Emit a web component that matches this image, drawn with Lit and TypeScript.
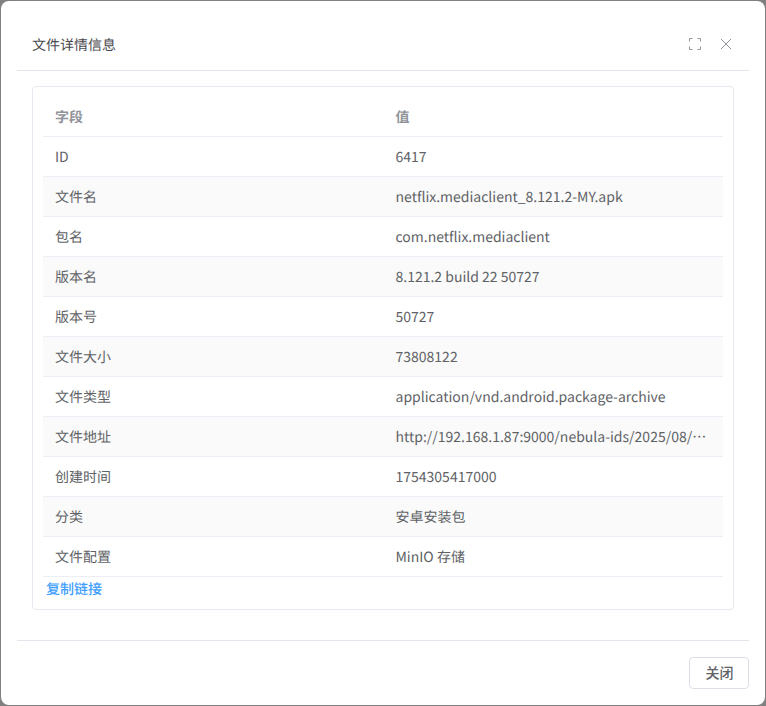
import { LitElement, html, css, svg } from "lit";
import { customElement } from "lit/decorators.js";

const ROWS: [string, string][] = [
  ["ID", "6417"],
  ["文件名", "netflix.mediaclient_8.121.2-MY.apk"],
  ["包名", "com.netflix.mediaclient"],
  ["版本名", "8.121.2 build 22 50727"],
  ["版本号", "50727"],
  ["文件大小", "73808122"],
  ["文件类型", "application/vnd.android.package-archive"],
  ["文件地址", "http://192.168.1.87:9000/nebula-ids/2025/08/04/netflix.mediaclient_8.121.2-MY.apk"],
  ["创建时间", "1754305417000"],
  ["分类", "安卓安装包"],
  ["文件配置", "MinIO 存储"],
];

@customElement("app-root")
export class AppRoot extends LitElement {
  static styles = css`
    :host {
      display: block;
      width: 766px;
      height: 706px;
      background: #808080;
      font-family: "Noto Sans CJK SC", "Noto Sans", sans-serif;
      font-size: 14px;
      color: #606266;
      overflow: hidden;
      text-rendering: geometricPrecision;
    }
    .backdrop {
      box-sizing: border-box;
      height: 706px;
      padding: 1px;
    }
    .dialog {
      box-sizing: border-box;
      height: 704px;
      background: #fff;
      border-radius: 8px;
      padding: 0 16px;
      display: flex;
      flex-direction: column;
    }
    .header {
      box-sizing: border-box;
      height: 70px;
      flex: none;
      border-bottom: 1px solid #e4e4ec;
      display: flex;
      align-items: center;
      justify-content: space-between;
      padding: 17px 16px 0 15px;
    }
    .title {
      font-size: 14px;
      line-height: 22px;
      padding-top: 2px;
      color: #4a4a4f;
    }
    .actions {
      display: flex;
      align-items: center;
      gap: 17px;
    }
    .actions svg {
      display: block;
      width: 14px;
      height: 14px;
    }
    .body {
      flex: 1;
      padding: 15px 15px 30px;
      display: flex;
      flex-direction: column;
      min-height: 0;
    }
    .card {
      box-sizing: border-box;
      height: 524px;
      border: 1px solid #e8e8f0;
      border-radius: 4px;
      padding: 10px;
    }
    .table {
      display: grid;
      grid-template-columns: 340.5px 339.5px;
    }
    .row {
      display: contents;
    }
    .cell {
      box-sizing: border-box;
      height: 40px;
      line-height: 41px;
      padding: 0 12px;
      border-bottom: 1px solid #ebeef5;
      white-space: nowrap;
      overflow: hidden;
      text-overflow: ellipsis;
      background: #fff;
    }
    .row.alt .cell {
      background: #fafafa;
    }
    .row.head .cell {
      font-weight: 700;
      color: #909399;
    }
    .link {
      display: block;
      margin: 0 0 0 3px;
      line-height: 24px;
      font-weight: 500;
      color: #409eff;
      text-decoration: none;
    }
    .footer {
      box-sizing: border-box;
      height: 65px;
      flex: none;
      border-top: 1px solid #e4e4ec;
      display: flex;
      justify-content: flex-end;
      padding-top: 16px;
    }
    .btn {
      box-sizing: border-box;
      width: 60px;
      height: 32px;
      border: 1px solid #dcdfe6;
      border-radius: 4px;
      background: #fff;
      color: #606266;
      font: inherit;
      font-weight: 500;
      padding: 0 0 2px 1px;
    }
  `;

  render() {
    return html`
      <div class="backdrop">
        <div class="dialog">
          <div class="header">
            <div class="title">文件详情信息</div>
            <div class="actions">
              <svg viewBox="0 0 14 14" fill="none" stroke="#909399" stroke-width="1">
                ${svg`<path d="M1.5 4.5V1.5H4.5M9.5 1.5H12.5V4.5M12.5 9.5V12.5H9.5M4.5 12.5H1.5V9.5" />`}
              </svg>
              <svg viewBox="0 0 14 14" fill="none" stroke="#909399" stroke-width="1">
                ${svg`<path d="M2 2L12 12M12 2L2 12" />`}
              </svg>
            </div>
          </div>
          <div class="body">
            <div class="card">
              <div class="table">
                <div class="row head">
                  <div class="cell">字段</div>
                  <div class="cell">值</div>
                </div>
                ${ROWS.map(
                  ([k, v], i) => html`
                    <div class="row ${i % 2 === 1 ? "alt" : ""}">
                      <div class="cell">${k}</div>
                      <div class="cell">${v}</div>
                    </div>
                  `
                )}
              </div>
              <a class="link">复制链接</a>
            </div>
          </div>
          <div class="footer">
            <button class="btn">关闭</button>
          </div>
        </div>
      </div>
    `;
  }
}
